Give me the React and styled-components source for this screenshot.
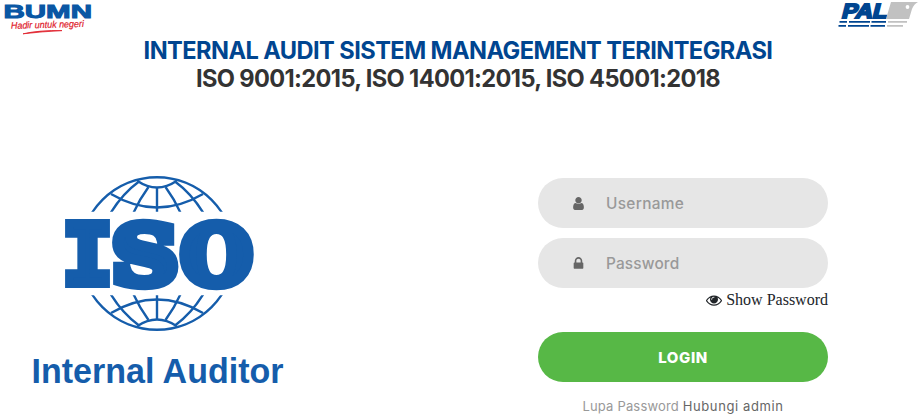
import React from 'react';
import styled, { createGlobalStyle } from 'styled-components';

const GlobalStyle = createGlobalStyle`
  * { box-sizing: border-box; }
  body { margin: 0; background: #fff; }
`;

const Page = styled.div`
  width: 922px;
  height: 419px;
  overflow: hidden;
  font-family: Inter, sans-serif;
`;

const TopBar = styled.header`
  display: flex;
  justify-content: space-between;
  height: 37px;
`;

const Heading = styled.h1`
  margin: 0;
  display: flex;
  flex-direction: column;
  align-items: center;
  font-size: 23.6px;
  font-weight: 700;
  line-height: 28px;
  width: 916px;
`;

const HeadingLine = styled.span`
  color: ${(p) => p.$color};
  letter-spacing: ${(p) => p.$spacing};
  white-space: nowrap;
`;

const Content = styled.main`
  display: flex;
  height: 326px;
`;

const Brand = styled.section`
  width: 538px;
  padding-top: 77px;
`;

const LoginForm = styled.form`
  width: 290px;
  padding-top: 85px;
  display: flex;
  flex-direction: column;
`;

const Field = styled.label`
  display: flex;
  align-items: center;
  gap: ${(p) => p.$gap};
  height: 50px;
  margin-bottom: 10px;
  padding-left: ${(p) => p.$inset};
  border-radius: 25px;
  background: #e6e6e6;
  color: #666;
`;

const Glyph = styled.svg`
  flex: none;
  width: ${(p) => p.$size}px;
  height: ${(p) => p.$size}px;
  fill: currentColor;
`;

const Input = styled.input`
  width: 200px;
  border: 0;
  padding: 0;
  outline: 0;
  background: transparent;
  font: 500 15.4px Inter, sans-serif;
  letter-spacing: ${(p) => p.$spacing};
  &::placeholder { color: #999; opacity: 1; }
`;

const ShowPassword = styled.button`
  display: flex;
  align-items: center;
  align-self: flex-end;
  gap: 4px;
  height: 24px;
  margin-top: -10px;
  padding: 0;
  border: 0;
  background: none;
  color: #212529;
  font: 16px 'Liberation Serif', serif;
`;

const LoginButton = styled.button`
  height: 50px;
  margin-top: 20px;
  border: 0;
  border-radius: 25px;
  background: #57b846;
  color: #fff;
  font: 800 15px Inter, sans-serif;
  letter-spacing: 0.6px;
`;

const Help = styled.p`
  margin: 14px 0 0;
  text-align: center;
  font-size: 13px;
  line-height: 20px;
  letter-spacing: 0.17px;
  color: #999;
`;

const HelpLink = styled.a`
  color: #666;
  letter-spacing: 0.6px;
`;

const icons = {
  user: 'M1536 1399q0 109-62.5 187t-150.5 78h-854q-88 0-150.5-78t-62.5-187q0-85 8.5-160.5t31.5-152 58.5-131 94-89 134.5-34.5q131 128 313 128t313-128q76 0 134.5 34.5t94 89 58.5 131 31.5 152 8.5 160.5zm-256-887q0 159-112.5 271.5t-271.5 112.5-271.5-112.5-112.5-271.5 112.5-271.5 271.5-112.5 271.5 112.5 112.5 271.5z',
  lock: 'M640 768h512v-192q0-106-75-181t-181-75-181 75-75 181v192zm832 96v576q0 40-28 68t-68 28h-960q-40 0-68-28t-28-68v-576q0-40 28-68t68-28h32v-192q0-184 132-316t316-132 316 132 132 316v192h32q40 0 68 28t28 68z',
  eye: 'M1664 960q-152-236-381-353 61 104 61 225 0 185-131.5 316.5t-316.5 131.5-316.5-131.5-131.5-316.5q0-121 61-225-229 117-381 353 133 205 333.5 326.5t434.5 121.5 434.5-121.5 333.5-326.5zm-720-384q0-20-14-34t-34-14q-125 0-214.5 89.5t-89.5 214.5q0 20 14 34t34 14 34-14 14-34q0-86 61-147t147-61q20 0 34-14t14-34zm848 384q0 34-20 69-140 230-376.5 368.5t-499.5 138.5-499.5-139-376.5-368q-20-35-20-69t20-69q140-229 376.5-368t499.5-139 499.5 139 376.5 368q20 35 20 69z',
};

function Icon({ name, size }) {
  return (
    <Glyph viewBox="0 0 1792 1792" $size={size} aria-hidden="true">
      <path d={icons[name]} />
    </Glyph>
  );
}

function BumnLogo() {
  return (
    <svg width="100" height="37" viewBox="0 0 100 37">
      <text x="3.500" y="18" fontFamily="Liberation Sans" fontWeight="700" fontSize="19" fill="#0a57a4" stroke="#0a57a4" strokeWidth="1" textLength="88.500" lengthAdjust="spacingAndGlyphs">BUMN</text>
      <text transform="rotate(-1.5 11 29)" x="11" y="28.8" fontFamily="Liberation Sans" fontStyle="italic" fontSize="9.5" fill="#e0202b" stroke="#e0202b" strokeWidth=".2" textLength="73" lengthAdjust="spacingAndGlyphs">Hadir untuk negeri</text>
      <path d="M23 33.8Q40 30 62 30.600Q42 31.600 23 33.800Z" fill="#e0202b" stroke="#e0202b" strokeWidth=".8" />
    </svg>
  );
}

function PalLogo() {
  return (
    <svg width="90" height="37" viewBox="0 0 90 37">
      <text transform="translate(9 17.8) skewX(-14)" fontFamily="Liberation Sans" fontWeight="700" fontSize="20.5" fill="#004590" stroke="#004590" strokeWidth="2" textLength="45" lengthAdjust="spacingAndGlyphs">PAL</text>
      <path d="M59 2H86Q82 4 80 9L77 19H54Z" fill="#c1c1c1" />
      <circle cx="75.500" cy="7" r="1.900" fill="#fff" />
      <path d="M7.500 21.800H15M17 21.800H38M39.500 21.800H54M6.500 25.800H14M16 25.800H37M38.500 25.800H53" stroke="#004590" strokeWidth="1.800" />
      <path d="M56 21.800H75M55 25.800H71" stroke="#c1c1c1" strokeWidth="1.800" />
    </svg>
  );
}

function GlobeCap({ flip }) {
  return (
    <g transform={flip ? 'translate(0 507) scale(1 -1)' : undefined}>
      <g clipPath="url(#cap)" fill="none" stroke="#155dab" strokeWidth="2.4">
        <circle cx="157" cy="254.500" r="77.200" />
        <path d="M137.500 181Q157 194 176.500 181" />
        <path d="M111 194Q157 221 203 194" />
        <path d="M157 187V213M148.500 187Q139 200 133 214M165.500 187Q175 200 181 214M139 181.500Q122 194 110 214M175 181.500Q192 194 204 214" />
      </g>
    </g>
  );
}

function IsoLogo() {
  return (
    <svg width="300" height="230" viewBox="0 170 300 230">
      <clipPath id="cap"><rect x="70" y="170" width="180" height="41.700" /></clipPath>
      <GlobeCap />
      <GlobeCap flip />
      <g fill="#155dab" stroke="#155dab" fontFamily="DejaVu Serif" fontWeight="700">
        <text x="62" y="284" fontSize="84" fontFamily="DejaVu Sans Mono" strokeWidth="8" textLength="51" lengthAdjust="spacingAndGlyphs">I</text>
        <text x="112" y="284" fontSize="81" strokeWidth="10.500" textLength="66" lengthAdjust="spacingAndGlyphs">S</text>
        <text x="181" y="284" fontSize="81" strokeWidth="10.500" textLength="71" lengthAdjust="spacingAndGlyphs">O</text>
      </g>
      <text x="31.500" y="383" fill="#155dab" fontFamily="Liberation Sans" fontWeight="700" fontSize="35" textLength="252" lengthAdjust="spacingAndGlyphs">Internal Auditor</text>
    </svg>
  );
}

export default function App() {
  return (
    <Page>
      <GlobalStyle />
      <TopBar>
        <BumnLogo />
        <PalLogo />
      </TopBar>
      <Heading>
        <HeadingLine $color="#004590" $spacing="-0.56px">INTERNAL AUDIT SISTEM MANAGEMENT TERINTEGRASI</HeadingLine>
        <HeadingLine $color="#333" $spacing="-0.63px">ISO 9001:2015, ISO 14001:2015, ISO 45001:2018</HeadingLine>
      </Heading>
      <Content>
        <Brand><IsoLogo /></Brand>
        <LoginForm onSubmit={(e) => e.preventDefault()}>
          <Field $inset="33px" $gap="20px"><Icon name="user" size={15} /><Input placeholder="Username" $spacing="0.32px" /></Field>
          <Field $inset="32.5px" $gap="20.5px"><Icon name="lock" size={15} /><Input type="password" placeholder="Password" $spacing="0.15px" /></Field>
          <ShowPassword type="button"><Icon name="eye" size={16} />Show Password</ShowPassword>
          <LoginButton>LOGIN</LoginButton>
          <Help>Lupa Password <HelpLink>Hubungi admin</HelpLink></Help>
        </LoginForm>
      </Content>
    </Page>
  );
}
